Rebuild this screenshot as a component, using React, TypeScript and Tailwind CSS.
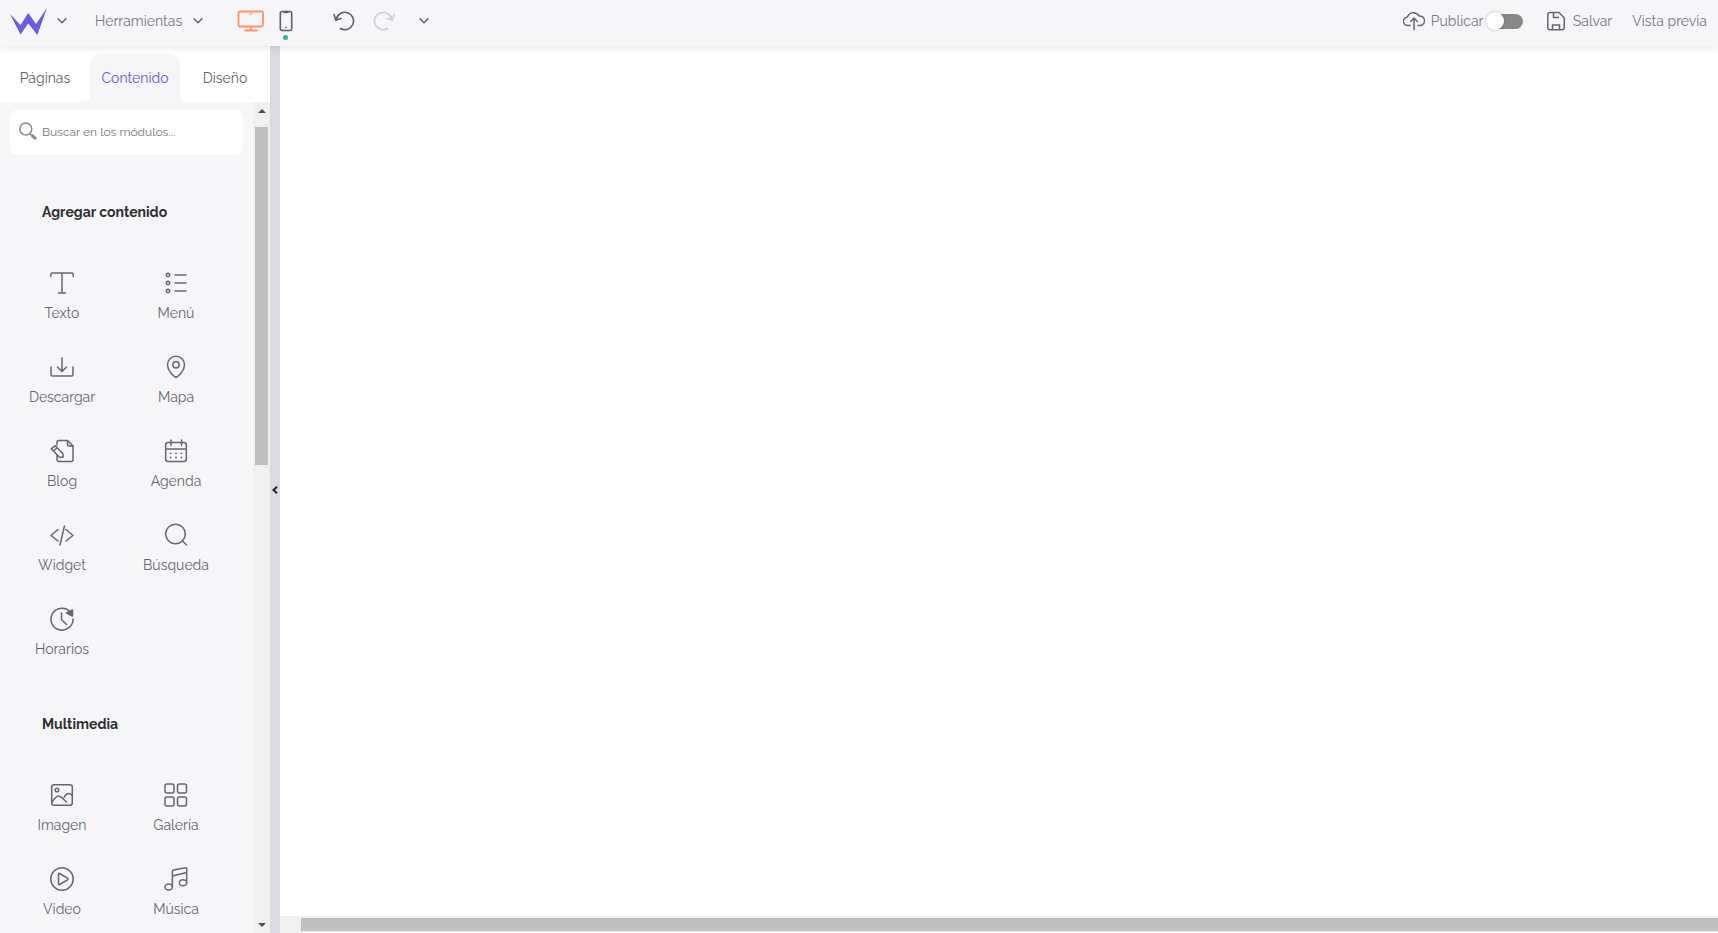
import type { ReactNode } from "react";

type Module = { label: string; icon: ReactNode };

const contentModules: Module[] = [
  {
    label: "Texto",
    icon: <path d="M.8 5.500V3.500Q.8 2 2.300 2H21.700Q23.200 2 23.200 3.500V5.500M12 2v20M8.500 22h7" />,
  },
  {
    label: "Menú",
    icon: (
      <>
        <circle cx="4" cy="4" r="1.700" />
        <circle cx="4" cy="12" r="1.700" />
        <circle cx="4" cy="20" r="1.700" />
        <path d="M11 4h11M11 12h11M11 20h11" />
      </>
    ),
  },
  {
    label: "Descargar",
    icon: <path d="M1 12v7.500q0 1.500 1.500 1.500h19q1.500 0 1.500-1.500V12M12 3v13M7.500 12l4.500 4.500 4.500-4.500" />,
  },
  {
    label: "Mapa",
    icon: (
      <>
        <path d="M12 22.500C9.500 21.500 3.500 16 3.500 9.700a8.500 8.500 0 0 1 17 0C20.500 16 14.500 21.500 12 22.500Z" />
        <circle cx="12" cy="9.700" r="3.200" />
      </>
    ),
  },
  {
    label: "Blog",
    icon: (
      <>
        <path d="M7 6V3.500Q7 1.500 9 1.500h8.500L23 7v13.500q0 2-2 2H9q-2 0-2-2V16" />
        <path d="M17.500 1.500V5.500Q17.500 7 19 7H23" />
        <path d="M1.200 9.800 5.300 6.700 13 14.700V18.200H9.500ZM3.700 11.700 7.200 8.700" />
      </>
    ),
  },
  {
    label: "Agenda",
    icon: (
      <>
        <rect x="1.700" y="3.500" width="20.600" height="19" rx="2.500" />
        <path d="M1.700 10h20.600M7 1v5.500M17.500 1v5.500" />
        <path d="M6.500 14.300h.01M12 14.300h.01M17.500 14.300h.01M6.500 18.500h.01M12 18.500h.01M17.500 18.500h.01" strokeWidth="1.800" />
      </>
    ),
  },
  {
    label: "Widget",
    icon: <path d="M8 6.500 1 12.500l7 5.500M16 6.500l7 6-7 5.500M14.500 3 10 22" />,
  },
  {
    label: "Búsqueda",
    icon: (
      <>
        <circle cx="11.500" cy="11" r="9.800" />
        <path d="m18.500 18 4 4" />
      </>
    ),
  },
  {
    label: "Horarios",
    icon: (
      <>
        <path d="M20.500 5.200A11 11 0 1 0 23 12M11.500 6v6.500l5 5" />
        <path d="M22.500 3v6l-6-3Z" className="fill-[#66666e]" />
      </>
    ),
  },
];

const mediaModules: Module[] = [
  {
    label: "Imagen",
    icon: (
      <>
        <rect x="1.700" y="1.700" width="20.600" height="20.600" rx="2.500" />
        <circle cx="7" cy="7" r="1.800" />
        <path d="M2 19c2-2.500 4-6 6.500-6s4 2.500 8 6M14 14.500c1.500-3 3-4 5-4 1.500 0 2.500 1 3.300 2" />
      </>
    ),
  },
  {
    label: "Galería",
    icon: (
      <>
        <rect x="1" y="1" width="9" height="9" rx="2" />
        <rect x="13.500" y="1" width="9" height="9" rx="2" />
        <rect x="1" y="14" width="9" height="9" rx="2" />
        <rect x="13.500" y="14" width="9" height="9" rx="2" />
      </>
    ),
  },
  {
    label: "Video",
    icon: (
      <>
        <circle cx="12" cy="12" r="11.200" />
        <path d="M8.500 7.200q0-1.200 1-.7l8 4.700q1 .8 0 1.600l-8 4.700q-1 .5-1-.7Z" />
      </>
    ),
  },
  {
    label: "Música",
    icon: (
      <>
        <ellipse cx="4.700" cy="20" rx="3.700" ry="3" />
        <ellipse cx="19" cy="15.700" rx="3.700" ry="3" />
        <path d="M8.400 20V4.500Q8.400 3.300 9.500 3L21.500.8q1.200-.2 1.200 1V15.700M8.400 9l14.300-3.500" />
      </>
    ),
  },
];

const tabs = ["Páginas", "Contenido", "Diseño"];

function Chevron() {
  return (
    <svg viewBox="0 0 10 6" className="w-[10px] h-[6px] fill-none stroke-[#5f5f67]" strokeWidth="1.400">
      <path d="m1 .8 4 4 4-4" strokeLinecap="round" strokeLinejoin="round" />
    </svg>
  );
}

function Arrow({ down = false }: { down?: boolean }) {
  return (
    <div className="h-[17px] flex items-center justify-center">
      <svg viewBox="0 0 8 4" className="w-2 h-1 fill-[#505050]">
        <path d={down ? "M0 0h8L4 4Z" : "M0 4h8L4 0Z"} />
      </svg>
    </div>
  );
}

function ModuleSection({ title, modules }: { title: string; modules: Module[] }) {
  return (
    <section>
      <h2 className="px-8 pb-12 text-sm font-bold text-[#2e2e33]">{title}</h2>
      <div className="grid grid-cols-2 w-[228px] -ml-[5px]">
        {modules.map((m) => (
          <button key={m.label} className="h-[84px] pt-px flex flex-col items-center gap-2 cursor-pointer">
            <svg
              viewBox="0 0 24 24"
              className="size-6 fill-none stroke-[#66666e]"
              strokeWidth="1.500"
              strokeLinecap="round"
              strokeLinejoin="round"
            >
              {m.icon}
            </svg>
            <span className="text-sm text-[#66666e]">{m.label}</span>
          </button>
        ))}
      </div>
    </section>
  );
}

function Header() {
  return (
    <header className="relative z-10 h-[46px] shrink-0 flex items-center justify-between pl-[10px] pr-[11px] pb-1 bg-[#f6f6f9] shadow-[0_1px_8px_rgba(0,0,0,0.12)] text-sm text-[#77777d]">
      <div className="flex items-center">
        <button aria-label="Menú principal" className="flex items-center gap-[10px]">
          <svg viewBox="0 0 37 27" className="w-[37px] h-[27px] fill-[#6a5ce6]">
            <path d="M0 6 10.500 17 18.300 5 26 16 37 0 27.300 27 18.300 15.500 10.500 26.500Z" />
          </svg>
          <Chevron />
        </button>
        <button className="ml-7 w-[108px] flex items-center justify-between">
          Herramientas
          <Chevron />
        </button>
        <button aria-label="Escritorio" className="ml-[34px]">
          <svg viewBox="0 0 28 22" className="w-7 h-[22px] fill-none stroke-[#fd9367]" strokeWidth="1.800" strokeLinecap="round">
            <rect x="1.500" y="1.500" width="24.500" height="15" rx="1.500" />
            <path d="M12 4h3.500" strokeWidth="1.200" />
            <path d="M13.800 17v3M8 20.500h12" />
          </svg>
        </button>
        <button aria-label="Móvil" className="relative ml-[14px]">
          <svg viewBox="0 0 14 22" className="w-[14px] h-[22px] fill-none stroke-[#5f5f67]" strokeWidth="1.600">
            <rect x="1.300" y="1.500" width="11.400" height="19" rx="2" />
            <path d="M4.500 2.300h5" />
            <path d="M6.300 17.500h1.400" />
          </svg>
          <span className="absolute -bottom-2 left-1 size-[5px] rounded-full bg-[#2fb38a]" />
        </button>
        <button aria-label="Deshacer" className="ml-10">
          <svg viewBox="0 0 22 20" className="w-[22px] h-5 fill-none stroke-[#5f5f67]" strokeWidth="1.600" strokeLinecap="round" strokeLinejoin="round">
            <path d="M3.300 8.200A8.700 8.700 0 1 1 7.500 17.500M1 3.500l1.800 5.700L8 7.500" />
          </svg>
        </button>
        <button aria-label="Rehacer" className="ml-[18px]">
          <svg viewBox="0 0 22 20" className="w-[22px] h-5 fill-none stroke-[#cdcdd2]" strokeWidth="1.600" strokeLinecap="round" strokeLinejoin="round">
            <path d="M18.700 8.200A8.700 8.700 0 1 0 14.500 17.500M21 3.500l-1.800 5.700L14 7.500" />
          </svg>
        </button>
        <button aria-label="Historial" className="ml-6">
          <Chevron />
        </button>
      </div>

      <div className="flex items-center">
        <label className="flex items-center">
          <svg viewBox="0 0 22 20" className="w-[22px] h-5 mr-[6px] fill-none stroke-[#66666e]" strokeWidth="1.500" strokeLinecap="round" strokeLinejoin="round">
            <path d="M7 14.500H5A4.200 4.200 0 0 1 4.500 6 6.300 6.300 0 0 1 16 5a4.800 4.800 0 0 1 1.500 9.500H15" />
            <path d="M11 18.500V7.500M7.700 10.500 11 7l3.300 3.500" />
          </svg>
          <span className="w-[57px]">Publicar</span>
          <input
            type="checkbox"
            role="switch"
            className="relative appearance-none w-[35px] h-[15px] rounded-full bg-[#888888] before:absolute before:-left-[2px] before:-top-[2px] before:size-[18px] before:rounded-full before:bg-white before:shadow-[0_0_3px_rgba(0,0,0,0.25)]"
          />
        </label>
        <button className="ml-6 flex items-center gap-2">
          <svg viewBox="0 0 18 20" className="w-[18px] h-5 fill-none stroke-[#66666e]" strokeWidth="1.500" strokeLinejoin="round">
            <path d="M3 1.500h9L17.200 6.700V16.500q0 2.200-2.200 2.200H3q-2.200 0-2.200-2.200V3.700Q.8 1.500 3 1.500Z" />
            <path d="M6.500 1.500v5h5.500M5.500 18.500V14h7v4.500" />
          </svg>
          Salvar
        </button>
        <a href="#" className="ml-5">Vista previa</a>
      </div>
    </header>
  );
}

export default function App() {
  return (
    <div className="h-screen flex flex-col overflow-hidden bg-white font-['Raleway','Lato',sans-serif]">
      <Header />
      <div className="flex-1 min-h-0 flex">
        <aside className="w-[270px] shrink-0 flex flex-col bg-[#f6f6f9]">
          <nav className="flex h-14 pt-2 shrink-0 bg-white text-sm">
            {tabs.map((tab) => (
              <button
                key={tab}
                className={`flex-1 ${
                  tab === "Contenido"
                    ? "relative rounded-t-[10px] bg-[#f6f6f9] text-[#6a4fe0] before:absolute before:bottom-0 before:-left-[6px] before:size-[6px] before:bg-[radial-gradient(circle_at_0_0,transparent_6px,#f6f6f9_6px)] after:absolute after:bottom-0 after:-right-[6px] after:size-[6px] after:bg-[radial-gradient(circle_at_100%_0,transparent_6px,#f6f6f9_6px)]"
                    : "text-[#5f5f67]"
                }`}
              >
                {tab}
              </button>
            ))}
          </nav>

          <div className="flex-1 min-h-0 flex">
            <div className="flex-1 min-w-0 overflow-hidden pt-2 px-[10px]">
              <label className="h-[45px] px-2 pb-0.5 flex items-center gap-1 rounded-lg bg-white">
                <svg viewBox="0 0 20 20" className="size-5 fill-none stroke-[#88888c]">
                  <circle cx="7.800" cy="7" r="6" strokeWidth="1.500" />
                  <path d="m12 11.500 2.500 2.500" strokeWidth="1.500" />
                  <path d="m13.500 13 4.500 4" strokeWidth="3" />
                </svg>
                <input
                  type="text"
                  aria-label="Buscar en los módulos"
                  placeholder="Buscar en los módulos..."
                  className="flex-1 min-w-0 text-xs outline-none placeholder:text-[#757575]"
                />
              </label>
              <div className="pt-[47px] flex flex-col gap-6">
                <ModuleSection title="Agregar contenido" modules={contentModules} />
                <ModuleSection title="Multimedia" modules={mediaModules} />
              </div>
            </div>

            {/* Vertical scrollbar */}
            <div className="w-[17px] shrink-0 flex flex-col bg-[#f0f0f0]">
              <Arrow />
              <div className="flex-1 pt-2 pl-[2px] pr-[2px]">
                <div className="h-3/7 bg-[#c0c0c0]" />
              </div>
              <Arrow down />
            </div>
          </div>
        </aside>

        <button aria-label="Ocultar panel" className="w-[10px] shrink-0 flex items-center justify-center bg-[#dadae0]">
          <svg viewBox="0 0 6 8" className="w-[6px] h-2 fill-none stroke-[#222222]" strokeWidth="2">
            <path d="M5 .8 1.500 4 5 7.200" />
          </svg>
        </button>

        <main className="flex-1 min-w-0 flex flex-col">
          <div className="flex-1 bg-white" />
          {/* Horizontal scrollbar */}
          <div className="h-[17px] py-[2px] pl-[21px] bg-[#f0f0f0]">
            <div className="h-full bg-[#c0c0c0]" />
          </div>
        </main>
      </div>
    </div>
  );
}
